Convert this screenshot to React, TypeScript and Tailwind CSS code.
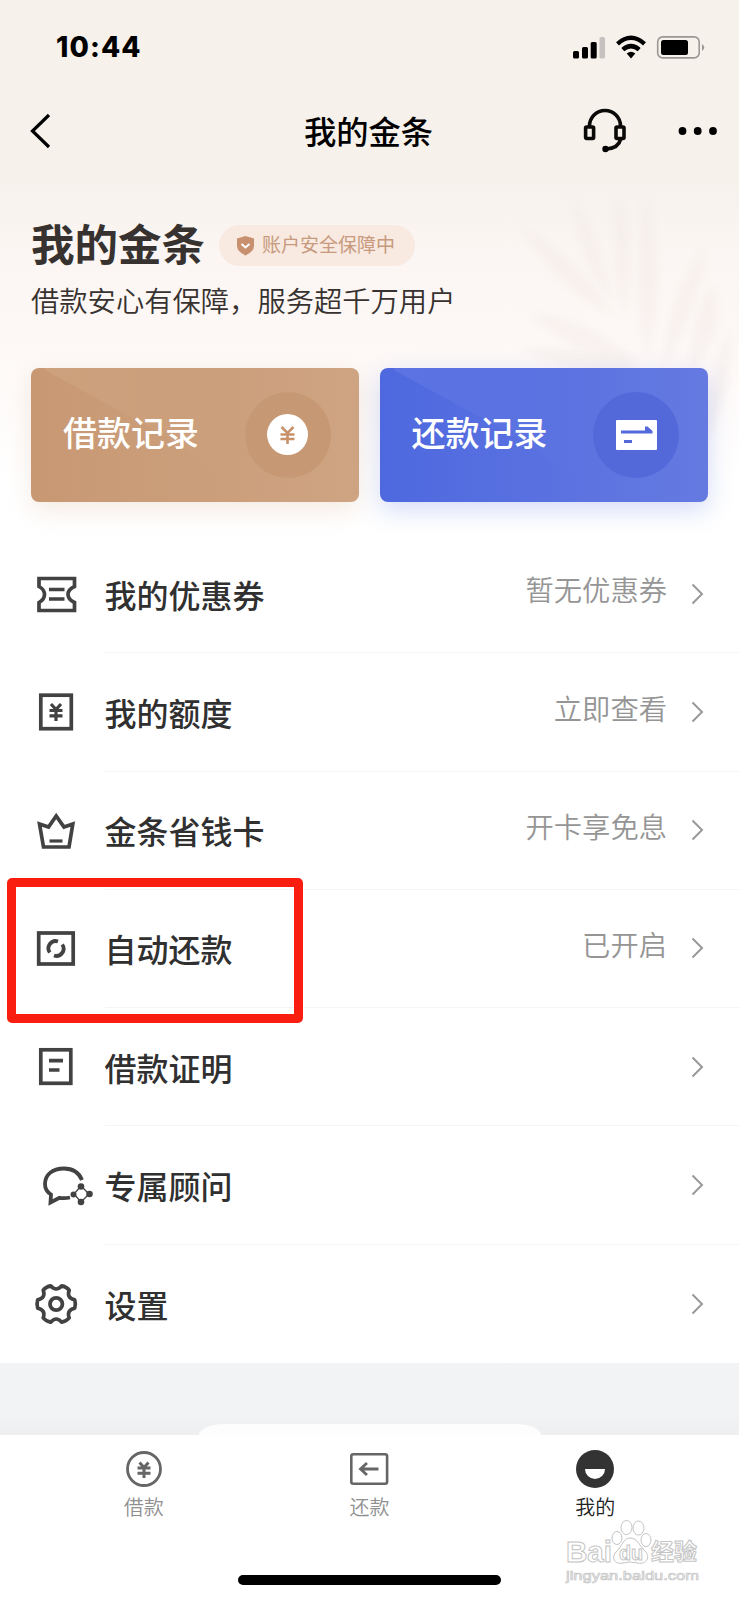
import React from 'react';

const StatusBar: React.FC = () => (
  <div className="flex h-[92px] items-center justify-between pl-[56px] pr-[34px] pt-[2px]">
    <span className="font-[Inter] text-[28px] font-extrabold leading-none tracking-[1.1px] text-black">10:44</span>
    <svg width="133" height="24" viewBox="0 0 133 24">
      <rect x="1" y="16" width="6" height="7.5" rx="1.5" />
      <rect x="10" y="12" width="6" height="11.5" rx="1.5" />
      <rect x="18.7" y="7" width="6" height="16.5" rx="1.5" />
      <rect x="27.5" y="2" width="5.5" height="21.5" rx="1.5" fill="#c5c1be" />
      <g fill="none" stroke="#000" strokeWidth="4.4">
        <path d="M45.500 8.800Q59 -3.300 72.500 8.800" />
        <path d="M50.800 14.700Q59 7.600 67.200 14.700" />
      </g>
      <path d="M54.700 18.500Q59 15 63.300 18.500L59 23.500Z" />
      <rect x="85.700" y="1.900" width="41.500" height="21" rx="5" fill="none" stroke="#9a9793" strokeWidth="1.600" />
      <rect x="89" y="5" width="27" height="15" rx="2.500" />
      <path d="M130 9Q134.500 12.400 130 16Z" fill="#9a9793" />
    </svg>
  </div>
);

const NavBar: React.FC = () => (
  <div className="flex h-[78px] items-center justify-between pl-[29px] pr-[22px]">
    <svg width="125" height="36" viewBox="0 0 125 36" fill="none" stroke="#000" strokeWidth="3.200">
      <path d="M20 2L3.500 18L20 34" />
    </svg>
    <h1 className="pb-[2px] text-[32.300px] font-medium leading-none text-black">我的金条</h1>
    <svg width="134" height="48" viewBox="0 0 134 48">
      <g fill="none" stroke="#0c0a09" strokeWidth="3.600">
        <path d="M6.500 20V19A15.500 15.500 0 0 1 37.500 19V20" />
        <rect x="2.600" y="20" width="8" height="11.500" rx="1" />
        <rect x="33" y="20" width="8" height="11.500" rx="1" />
        <path d="M37.500 32.500Q35.500 41 23.500 42" />
      </g>
      <circle cx="22.500" cy="42" r="3.200" />
      <circle cx="99.500" cy="24" r="3.900" />
      <circle cx="114.700" cy="24" r="3.900" />
      <circle cx="130" cy="24" r="3.900" />
    </svg>
  </div>
);

const Palm: React.FC = () => (
  <svg className="absolute right-0 top-[180px] blur-[4px]" width="239" height="260" viewBox="500 180 239 260">
    <g fill="#efe7e2" fillOpacity=".36">
      <path d="M521 228Q565 245 612 313Q570 300 521 228Z" />
      <path d="M572 198Q598 230 612 300Q585 280 572 198Z" />
      <path d="M616 195Q640 240 624 315Q610 260 616 195Z" />
      <path d="M645 198Q668 270 647 360Q632 280 645 198Z" />
      <path d="M706 245Q702 300 664 368Q662 310 706 245Z" />
      <path d="M712 285Q730 330 690 372Q690 320 712 285Z" />
      <path d="M728 330Q738 370 708 440Q706 380 728 330Z" />
      <path d="M530 314Q590 318 640 365Q580 360 530 314Z" />
      <path d="M520 348Q580 345 640 368Q580 380 520 348Z" />
    </g>
  </svg>
);

const Hero: React.FC = () => (
  <div className="h-[198px] px-[31px] pt-[49px]">
    <div className="flex items-center">
      <h2 className="w-[188px] whitespace-nowrap text-[43.500px] font-bold leading-[46px] text-[#37322f]">我的金条</h2>
      <div className="mt-1.5 flex h-[41px] w-[196px] items-center gap-2 rounded-full bg-[#f8e9e1] pl-[18px] text-[#c79a7d]">
        <svg width="17" height="20" viewBox="0 0 17 20">
          <path d="M8.500 0L17 2.500V10Q17 15.500 8.500 19.500Q0 15.500 0 10V2.500Z" fill="#c79170" />
          <path d="M4.500 8L8.500 11.500L12.500 8" fill="none" stroke="#fff" strokeWidth="2" />
        </svg>
        <span className="whitespace-nowrap pb-[4px] text-[19px] leading-none">账户安全保障中</span>
      </div>
    </div>
    <p className="mt-[20px] whitespace-nowrap text-[28.300px] font-[350] leading-[28px] text-[#37322f]">
      借款安心有保障，服务超千万用户
    </p>
  </div>
);

const Cards: React.FC = () => (
  <div className="flex gap-[21px] px-[31px]">
    <div className="relative flex h-[134px] flex-1 items-center justify-between rounded-lg bg-linear-to-r from-[#c89873] to-[#cea482] pl-8 pr-[28px] shadow-[0_8px_24px_rgba(205,160,125,0.22)]">
      <svg className="absolute left-0 top-0" width="328" height="134" viewBox="0 0 328 134">
        <defs>
          <linearGradient id="goldSheen">
            <stop offset="0" stopColor="#d4aa87" stopOpacity=".5" />
            <stop offset=".6" stopColor="#d4aa87" stopOpacity="0" />
          </linearGradient>
        </defs>
        <path d="M14 2L138 70L230 134H328V8Q328 0 320 0H14Z" fill="url(#goldSheen)" />
      </svg>
      <span className="relative pb-[7px] text-[34px] font-medium leading-none text-white">借款记录</span>
      <span className="relative mb-[1px] flex h-[86px] w-[86px] items-center justify-center rounded-full bg-[#c79874]">
        <svg width="41" height="41" viewBox="0 0 41 41">
          <circle cx="20.500" cy="20.500" r="20.500" fill="#fff" />
          <path d="M14.500 13L20.500 19L26.500 13M13.500 20.500H27.500M13.500 25H27.500M20.500 19V30" fill="none" stroke="#c79169" strokeWidth="2.600" />
        </svg>
      </span>
    </div>
    <div className="relative flex h-[134px] flex-1 items-center justify-between rounded-lg bg-linear-to-r from-[#4e68df] to-[#657ae1] pl-8 pr-[29px] shadow-[0_8px_24px_rgba(85,110,225,0.25)]">
      <svg className="absolute left-0 top-0" width="328" height="134" viewBox="0 0 328 134">
        <defs>
          <linearGradient id="blueSheen">
            <stop offset="0" stopColor="#6c82e8" stopOpacity=".45" />
            <stop offset=".6" stopColor="#6c82e8" stopOpacity="0" />
          </linearGradient>
        </defs>
        <path d="M14 2L138 70L230 134H328V8Q328 0 320 0H14Z" fill="url(#blueSheen)" />
      </svg>
      <span className="relative pb-[7px] text-[34px] font-medium leading-none text-white">还款记录</span>
      <span className="relative mb-[1px] flex h-[86px] w-[86px] items-center justify-center rounded-full bg-[#5369da]">
        <svg width="41" height="30" viewBox="0 0 41 30">
          <rect width="41" height="30" rx="1" fill="#fff" />
          <path d="M5 10.500H29V6.500H31.500L36.500 11V13.500H5Z" fill="#5369da" />
          <rect x="8" y="20" width="8" height="3" fill="#5369da" />
        </svg>
      </span>
    </div>
  </div>
);

const rows = [
  {
    label: '我的优惠券',
    value: '暂无优惠券',
    icon: (
      <>
        <path d="M9 10.500H44.500V18.500Q38 21.500 38 26.500Q38 31.500 44.500 34.500V42.500H9V34.500Q14.500 31.500 14.500 26.500Q14.500 21.500 9 18.500Z" />
        <path d="M19 21.500H34.500M19 31H34.500" />
      </>
    ),
  },
  {
    label: '我的额度',
    value: '立即查看',
    icon: (
      <>
        <rect x="10.800" y="9.200" width="30.500" height="33.500" />
        <path d="M21 18L26 23.500L31 18M19.500 24.500H32.500M19.500 29.800H32.500M26 23.500V35" strokeWidth="3.200" />
      </>
    ),
  },
  {
    label: '金条省钱卡',
    value: '开卡享免息',
    icon: (
      <>
        <path d="M9.500 19L18.500 22L26.200 11L34 22L42.800 19L39 42H13.500Z" />
        <path d="M19.500 36H32.500" strokeWidth="3.200" />
      </>
    ),
  },
  {
    label: '自动还款',
    value: '已开启',
    icon: (
      <>
        <rect x="8.700" y="10" width="34.500" height="31" />
        <path d="M19.800 29.500A7.200 7.200 0 0 1 28 18.500M32.200 21.500A7.200 7.200 0 0 1 24 32.500" strokeWidth="3.800" />
      </>
    ),
  },
  {
    label: '借款证明',
    value: '',
    icon: (
      <>
        <rect x="10.800" y="8.800" width="30" height="33.500" />
        <path d="M19 19.700H33M19 29H29.500" />
      </>
    ),
  },
  {
    label: '专属顾问',
    value: '',
    icon: (
      <>
        <path d="M52 21C48 11.500 40 9.500 34 9.500C22 9.500 15 16 15 25C15 30 17 33 21 35.500L20.500 43.500L29.500 38.800Q35 39.500 40 38.500" strokeWidth="3.800" />
        <path d="M51 27L44 35L51 43L59 35Z" strokeWidth="1.300" />
        <g fill="#424242" stroke="none">
          <circle cx="51" cy="27.500" r="3.300" />
          <circle cx="43.500" cy="35.500" r="3" />
          <circle cx="51" cy="43" r="3.300" />
          <circle cx="59.500" cy="35" r="3.300" />
        </g>
      </>
    ),
  },
  {
    label: '设置',
    value: '',
    icon: (
      <g transform="translate(26.200 26)">
        <path d="M18.500 4.300Q10.200 5.900 13 13.900Q10 17.500 5.600 18.200Q0 11.800 -5.600 18.200Q-10 17.500 -13 13.900Q-10.200 5.900 -18.500 4.300Q-19.800 0 -18.500 -4.300Q-10.200 -5.900 -13 -13.900Q-10 -17.500 -5.600 -18.200Q0 -11.800 5.600 -18.200Q10 -17.500 13 -13.900Q10.200 -5.900 18.500 -4.300Q19.800 0 18.500 4.300Z" strokeLinejoin="round" />
        <circle r="6.200" strokeWidth="3.800" />
      </g>
    ),
  },
];

const Menu: React.FC = () => (
  <div className="relative mt-[33px]">
    {rows.map((row, index) => (
      <div key={row.label} className="flex h-[118.250px] pl-[30px]">
        <svg className="mt-[33px] shrink-0" width="74.500" height="52" viewBox="0 0 74.500 52" fill="none" stroke="#424242" strokeWidth="3.700">
          {row.icon}
        </svg>
        <div
          className={`flex flex-1 items-center justify-between pr-[35px] ${
            index < rows.length - 1 ? 'border-b border-[#f4f4f4]' : ''
          }`}
        >
          <span className="text-[32px] font-medium leading-none text-[#303030]">{row.label}</span>
          <div className="flex items-center gap-6">
            <span className="pb-[8px] text-[28.300px] font-[350] leading-none text-[#959595]">{row.value}</span>
            <svg width="13" height="22" viewBox="0 0 13 22" fill="none" stroke="#999" strokeWidth="2">
              <path d="M1.500 1.500L11 11L1.500 20.500" />
            </svg>
          </div>
        </div>
      </div>
    ))}
    {/* Highlight around the auto repay row */}
    <div className="absolute left-[7px] top-[343px] h-[145px] w-[296px] rounded-[5px] border-[9px] border-[#f91e10]"></div>
  </div>
);

const tabs = [
  {
    label: '借款',
    color: 'text-[#8f8f8f]',
    icon: (
      <g fill="none" stroke="#666" strokeWidth="2.800">
        <circle cx="20" cy="20" r="16.500" />
        <path d="M15.500 13.500L20 18.500L24.500 13.500M13.500 19H26.500M13.500 24.200H26.500M20 18.500V29" strokeWidth="3" />
      </g>
    ),
  },
  {
    label: '还款',
    color: 'text-[#8f8f8f]',
    icon: (
      <g fill="none" stroke="#666" strokeWidth="2.600">
        <rect x="1.300" y="5.300" width="35.800" height="29.400" rx="2" />
        <path d="M28.500 20H10.500M17 14L10.500 20L17 26" strokeWidth="2.800" />
      </g>
    ),
  },
  {
    label: '我的',
    color: 'text-[#222]',
    icon: (
      <>
        <circle cx="20" cy="20" r="19" fill="#333" />
        <path d="M10 20H30A10 10 0 0 1 10 20Z" fill="#fff" />
      </>
    ),
  },
];

const Watermark: React.FC = () => (
  <svg
    className="absolute left-[562px] top-[80px] overflow-visible"
    width="145"
    height="70"
    viewBox="0 0 145 70"
    fill="#fff"
    stroke="#c4c4c4"
    strokeWidth="1"
    fontFamily="'Liberation Sans', 'Noto Sans CJK SC', sans-serif"
    fontWeight="bold"
  >
    <text x="4" y="47" fontSize="30" textLength="46" lengthAdjust="spacingAndGlyphs">Bai</text>
    <path d="M68 23C76 23 77 31 83 36C89 42 84 50 76 48Q68 46 61 48C52 50 49 42 54 37C60 32 61 23 68 23Z" />
    <ellipse cx="55" cy="23" rx="5" ry="6.500" />
    <ellipse cx="64.500" cy="12.500" rx="5.500" ry="7" />
    <ellipse cx="76.500" cy="13" rx="5.500" ry="7" />
    <ellipse cx="84" cy="25" rx="5" ry="6.500" />
    <text x="57" y="45" fontSize="21" textLength="24" lengthAdjust="spacingAndGlyphs">du</text>
    <text x="89" y="45" fontSize="23" textLength="46">经验</text>
    <text x="4" y="65" fontSize="13.500" textLength="133" lengthAdjust="spacingAndGlyphs" fontWeight="normal" strokeWidth=".7">jingyan.baidu.com</text>
  </svg>
);

const TabBar: React.FC = () => (
  <div className="relative flex h-[165px] flex-col items-center bg-white">
    <div className="flex w-full px-[31px] pt-[14px]">
      {tabs.map((tab) => (
        <div key={tab.label} className="flex flex-1 flex-col items-center gap-2">
          <svg width="40" height="40" viewBox="0 0 40 40">{tab.icon}</svg>
          <span className={`text-[20px] font-[350] leading-[20px] ${tab.color}`}>{tab.label}</span>
        </div>
      ))}
    </div>
    <div className="mb-[15px] mt-auto h-[10px] w-[263px] rounded-full bg-black"></div>
    <Watermark />
  </div>
);

const App: React.FC = () => {
  return (
    <div className="relative h-[1600px] w-[739px] overflow-hidden bg-white font-['Noto_Sans_CJK_SC',sans-serif]">
      <div className="absolute inset-x-0 top-0 h-[540px] bg-[linear-gradient(#f6f1eb_0px,#f6f1eb_180px,#fbf6f3_250px,#fdf8f6_340px,#ffffff_480px)]"></div>
      <Palm />
      <div className="relative flex h-full flex-col">
        <StatusBar />
        <NavBar />
        <Hero />
        <Cards />
        <Menu />
        <div className="flex flex-1 items-end justify-center overflow-hidden bg-linear-to-b from-[#f2f3f5] from-70% to-[#eeeff1]">
          <div className="h-[11px] w-[342px] rounded-[26px_26px_0_0/11px_11px_0_0] bg-[#fdfdfd]"></div>
        </div>
        <TabBar />
      </div>
    </div>
  );
};

export default App;
